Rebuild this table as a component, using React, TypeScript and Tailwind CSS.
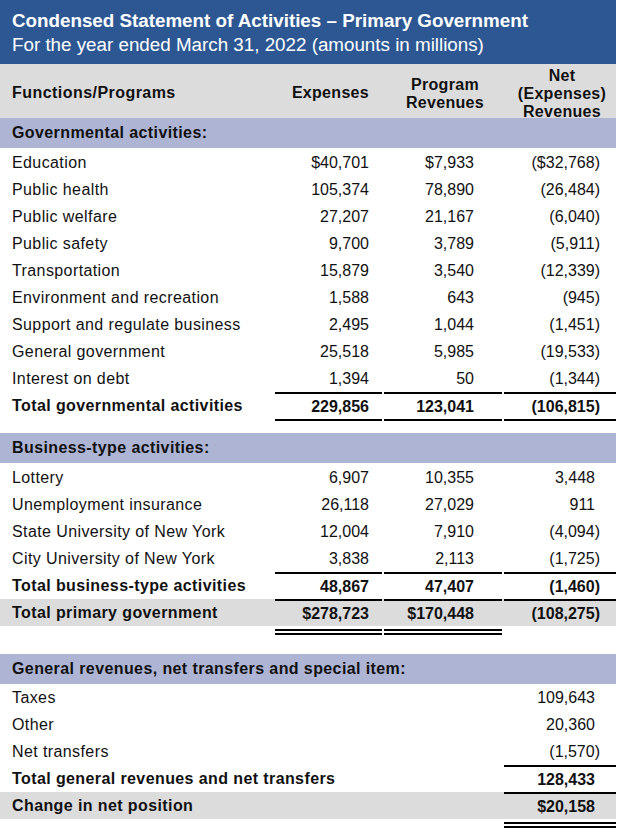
import type { ReactNode } from 'react';

type Kind = 'item' | 'total' | 'grand';

type Row = {
  label: string;
  exp?: string;
  rev?: string;
  net?: string;
  kind?: Kind;
};

const GOVERNMENTAL: Row[] = [
  { label: 'Education', exp: '$40,701', rev: '$7,933', net: '($32,768)' },
  { label: 'Public health', exp: '105,374', rev: '78,890', net: '(26,484)' },
  { label: 'Public welfare', exp: '27,207', rev: '21,167', net: '(6,040)' },
  { label: 'Public safety', exp: '9,700', rev: '3,789', net: '(5,911)' },
  { label: 'Transportation', exp: '15,879', rev: '3,540', net: '(12,339)' },
  { label: 'Environment and recreation', exp: '1,588', rev: '643', net: '(945)' },
  { label: 'Support and regulate business', exp: '2,495', rev: '1,044', net: '(1,451)' },
  { label: 'General government', exp: '25,518', rev: '5,985', net: '(19,533)' },
  { label: 'Interest on debt', exp: '1,394', rev: '50', net: '(1,344)' },
];

const BUSINESS: Row[] = [
  { label: 'Lottery', exp: '6,907', rev: '10,355', net: '3,448' },
  { label: 'Unemployment insurance', exp: '26,118', rev: '27,029', net: '911' },
  { label: 'State University of New York', exp: '12,004', rev: '7,910', net: '(4,094)' },
  { label: 'City University of New York', exp: '3,838', rev: '2,113', net: '(1,725)' },
];

const GENERAL: Row[] = [
  { label: 'Taxes', net: '109,643' },
  { label: 'Other', net: '20,360' },
  { label: 'Net transfers', net: '(1,570)' },
];

// label | expenses | program revenues | net, with 2px breaks between the rules
const GRID = 'grid grid-cols-[273px_107px_118px_112px] gap-x-[2px]';

// positive numbers line up with the digits of bracketed ones
function netPad(v?: string) {
  return v && v.endsWith(')') ? 'pr-[16px]' : 'pr-[21px]';
}

function Band({ children }: { children: ReactNode }) {
  return (
    <div className="h-[30px] bg-[#aeb5d4] flex items-center pl-3 font-bold tracking-[0.4px]">
      {children}
    </div>
  );
}

function TableRow({ row, lines = [false, false, false] }: { row: Row; lines?: boolean[] }) {
  const bold = row.kind === 'total' || row.kind === 'grand';
  const line = 'border-t-2 border-black';
  return (
    <div className={`${GRID} h-[27px] ${row.kind === 'grand' ? 'bg-[#dcdcdc]' : ''} ${bold ? 'font-bold' : ''}`}>
      <div className="pl-3 flex items-center whitespace-nowrap tracking-[0.4px]">{row.label}</div>
      <div className={`flex items-center justify-end pr-[13px] ${lines[0] ? line : ''}`}>{row.exp}</div>
      <div className={`flex items-center justify-end pr-[28px] ${lines[1] ? line : ''}`}>{row.rev}</div>
      <div className={`flex items-center justify-end ${netPad(row.net)} ${lines[2] ? line : ''}`}>{row.net}</div>
    </div>
  );
}

function Rule({ cols }: { cols: boolean[] }) {
  return (
    <div className={GRID}>
      <div />
      {cols.map((on, i) => (
        <div key={i} className={on ? 'border-t-2 border-black' : ''} />
      ))}
    </div>
  );
}

function DoubleRule({ cols }: { cols: boolean[] }) {
  return (
    <div className={`${GRID} pt-[3px]`}>
      <div />
      {cols.map((on, i) => (
        <div key={i} className={on ? 'h-[6px] border-y-2 border-black' : ''} />
      ))}
    </div>
  );
}

export default function App() {
  return (
    <div className="w-[618px] h-[834px] bg-white text-[#111] text-[16px] font-['Liberation_Sans',Arial,sans-serif] overflow-hidden">
      <div className="w-[616px]">
        {/* Title */}
        <div className="h-[64px] bg-[#2d5793] text-white px-3 pt-[9px] text-[18.8px] leading-[24px]">
          <div className="font-bold">Condensed Statement of Activities – Primary Government</div>
          <div>For the year ended March 31, 2022 (amounts in millions)</div>
        </div>

        {/* Column heads */}
        <div className={`${GRID} h-[54px] bg-[#dcdcdc] font-bold leading-[18px] tracking-[0.3px]`}>
          <div className="pl-3 flex items-center tracking-[0.45px]">Functions/Programs</div>
          <div className="flex items-center justify-end pr-[13px]">Expenses</div>
          <div className="flex items-center justify-center text-center pl-[4px] pt-[2px]">
            Program
            <br />
            Revenues
          </div>
          <div className="flex items-center justify-center text-center pl-[4px] pt-[3px]">
            Net
            <br />
            (Expenses)
            <br />
            Revenues
          </div>
        </div>

        <Band>Governmental activities:</Band>
        <div className="pt-[1px]">
          {GOVERNMENTAL.map((r) => (
            <TableRow key={r.label} row={r} />
          ))}
        </div>
        <TableRow
          row={{ label: 'Total governmental activities', exp: '229,856', rev: '123,041', net: '(106,815)', kind: 'total' }}
          lines={[true, true, true]}
        />
        <Rule cols={[true, true, true]} />
        <div className="h-[12px]" />

        <Band>Business-type activities:</Band>
        <div className="pt-[1px]">
          {BUSINESS.map((r) => (
            <TableRow key={r.label} row={r} />
          ))}
        </div>
        <TableRow
          row={{ label: 'Total business-type activities', exp: '48,867', rev: '47,407', net: '(1,460)', kind: 'total' }}
          lines={[true, true, true]}
        />
        <TableRow
          row={{ label: 'Total primary government', exp: '$278,723', rev: '$170,448', net: '(108,275)', kind: 'grand' }}
          lines={[true, true, true]}
        />
        <DoubleRule cols={[true, true, false]} />
        <div className="h-[19px]" />

        <Band>General revenues, net transfers and special item:</Band>
        {GENERAL.map((r) => (
          <TableRow key={r.label} row={r} />
        ))}
        <TableRow
          row={{ label: 'Total general revenues and net transfers', net: '128,433', kind: 'total' }}
          lines={[false, false, true]}
        />
        <TableRow
          row={{ label: 'Change in net position', net: '$20,158', kind: 'grand' }}
          lines={[false, false, true]}
        />
        <DoubleRule cols={[false, false, true]} />
      </div>
    </div>
  );
}
